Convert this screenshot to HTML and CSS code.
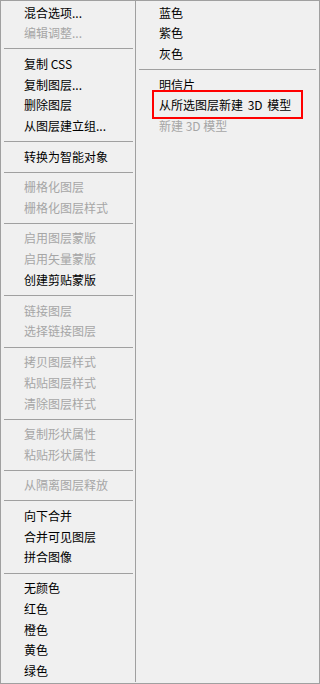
FILE: index.html
```html
<!DOCTYPE html>
<html lang="zh-CN">

<head>
    <meta charset="UTF-8">
    <meta name="viewport" content="width=device-width, initial-scale=1.0">
    <title>图层菜单</title>
    <link rel="stylesheet" href="styles.css">
</head>

<body>
    <div class="menu">
        <!-- 左列 -->
        <ul class="col col-left">
            <li class="item">混合选项...</li>
            <li class="item off">编辑调整...</li>
            <li class="sep"></li>
            <li class="item">复制 CSS</li>
            <li class="item">复制图层...</li>
            <li class="item">删除图层</li>
            <li class="item">从图层建立组...</li>
            <li class="sep"></li>
            <li class="item">转换为智能对象</li>
            <li class="sep"></li>
            <li class="item off">栅格化图层</li>
            <li class="item off">栅格化图层样式</li>
            <li class="sep"></li>
            <li class="item off">启用图层蒙版</li>
            <li class="item off">启用矢量蒙版</li>
            <li class="item">创建剪贴蒙版</li>
            <li class="sep"></li>
            <li class="item off">链接图层</li>
            <li class="item off">选择链接图层</li>
            <li class="sep"></li>
            <li class="item off">拷贝图层样式</li>
            <li class="item off">粘贴图层样式</li>
            <li class="item off">清除图层样式</li>
            <li class="sep"></li>
            <li class="item off">复制形状属性</li>
            <li class="item off">粘贴形状属性</li>
            <li class="sep"></li>
            <li class="item off">从隔离图层释放</li>
            <li class="sep"></li>
            <li class="item">向下合并</li>
            <li class="item">合并可见图层</li>
            <li class="item">拼合图像</li>
            <li class="sep"></li>
            <li class="item">无颜色</li>
            <li class="item">红色</li>
            <li class="item">橙色</li>
            <li class="item">黄色</li>
            <li class="item">绿色</li>
        </ul>

        <!-- 右列 -->
        <ul class="col col-right">
            <li class="item">蓝色</li>
            <li class="item">紫色</li>
            <li class="item">灰色</li>
            <li class="sep"></li>
            <li class="item">明信片</li>
            <li class="item"><span class="marked">从所选图层新建 3D 模型</span></li>
            <li class="item off">新建 3D 模型</li>
        </ul>
    </div>
</body>

</html>
```

FILE: styles.css
```css
/* 页面 */
body {
    margin: 0;
    padding: 0;
    font-family: "Noto Sans CJK SC", "Liberation Sans", sans-serif;
    font-size: 12px;
    color: #000;
}

/* 菜单外框 */
.menu {
    display: flex;
    width: 320px;
    height: 684px;
    box-sizing: border-box;
    padding-bottom: 1px;
    border: 1px solid #a0a0a0;
    background: #f0f0f0;
}

.col {
    list-style: none;
    margin: 0;
    padding: 1.5px 0 0 0;
}

.col-left {
    width: 134px;
    border-right: 1px solid #a0a0a0;
}

.col-right {
    flex: 1;
}

.item {
    height: 20.85px;
    line-height: 20.85px;
    padding-left: 23px;
    white-space: nowrap;
}

/* 不可用项 */
.item.off {
    color: #a6a6a6;
}

/* 分隔线 */
.sep {
    height: 1px;
    margin: 4.3px 2px 4.3px 3px;
    background: #a0a0a0;
}

.col-right .sep {
    margin-right: 3px;
}

/* 红框标注 */
.marked {
    position: relative;
    display: inline-block;
    word-spacing: 2px;
}

.marked::after {
    content: "";
    position: absolute;
    left: -7px;
    right: -12px;
    top: -5px;
    bottom: -3px;
    border: 2px solid #ff0000;
}
```
